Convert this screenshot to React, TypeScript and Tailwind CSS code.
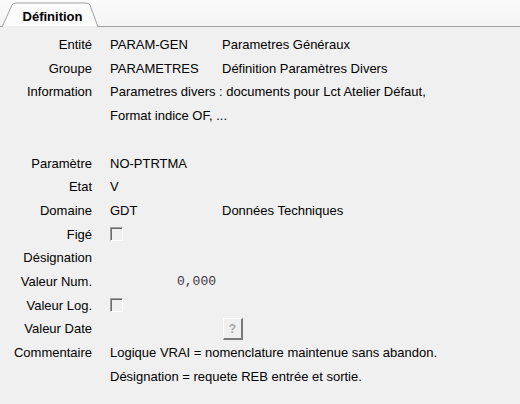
import React from "react";

type Row = {
  label: string;
  value?: React.ReactNode;
  extra?: string;
};

const Checkbox = () => (
  <span className="block w-[13px] h-[14px] border-t border-l border-[#a0a0a0] border-r border-b border-r-white border-b-white shadow-[inset_1px_1px_0_#696969]" />
);

const HelpButton = () => (
  <span className="flex items-center justify-center w-[20px] h-[22px] bg-[#f0f0f0] border-t border-l border-white border-r-2 border-b-2 border-r-[#7a7a7a] border-b-[#7a7a7a] text-[12px] font-bold text-[#a8a8a8] leading-none">
    ?
  </span>
);

const rows: Row[] = [
  { label: "Entité", value: "PARAM-GEN", extra: "Parametres Généraux" },
  { label: "Groupe", value: "PARAMETRES", extra: "Définition Paramètres Divers" },
  { label: "Information", value: "Parametres divers : documents pour Lct Atelier Défaut," },
  { label: "", value: "Format indice OF, ..." },
  { label: "" },
  { label: "Paramètre", value: "NO-PTRTMA" },
  { label: "Etat", value: "V" },
  { label: "Domaine", value: "GDT", extra: "Données Techniques" },
  { label: "Figé", value: <Checkbox /> },
  { label: "Désignation" },
  {
    label: "Valeur Num.",
    value: (
      <span className="pl-[67px] font-['Liberation_Mono',monospace] text-[13px] text-[#3d3540]">
        0,000
      </span>
    ),
  },
  { label: "Valeur Log.", value: <Checkbox /> },
  {
    label: "Valeur Date",
    value: (
      <span className="pl-[113px]">
        <HelpButton />
      </span>
    ),
  },
  { label: "Commentaire", value: "Logique VRAI = nomenclature maintenue sans abandon." },
  { label: "", value: "Désignation = requete REB entrée et sortie." },
];

export default function App() {
  return (
    <div className="w-[520px] h-[404px] bg-[#f0f0f0] font-['Liberation_Sans',Arial,sans-serif] text-[13px] text-black overflow-hidden">
      {/* onglets */}
      <div className="h-[27px] bg-gradient-to-b from-[#fbfbfb] to-[#f4f4f4] border-b border-[#a0a0a0] flex items-end pl-[2px]">
        <div className="relative h-[25px] w-[97px] mb-[-1px] flex items-center justify-center pl-[4px]">
          <svg className="absolute inset-0" width="97" height="25" viewBox="0 0 97 25">
            <path
              d="M0 25 L10 3 Q11 1 14 1 L84 1 Q87 1 88 3 L96 25 Z"
              fill="#fcfcfc"
              stroke="#a0a0a0"
              strokeWidth="1"
            />
            <rect x="1" y="24" width="94" height="2" fill="#f0f0f0" />
          </svg>
          <span className="relative font-bold text-[13px] leading-none pt-[3px]">Définition</span>
        </div>
      </div>

      <div className="pt-[6px]">
        {rows.map((r, i) => (
          <div key={i} className="flex items-center h-[23.7px]">
            <div className="w-[92px] shrink-0 text-right whitespace-nowrap">{r.label}</div>
            <div className="pl-[18px] w-[130px] shrink-0 flex items-center whitespace-nowrap">
              {r.value}
            </div>
            {r.extra && <div className="whitespace-nowrap">{r.extra}</div>}
          </div>
        ))}
      </div>
    </div>
  );
}
